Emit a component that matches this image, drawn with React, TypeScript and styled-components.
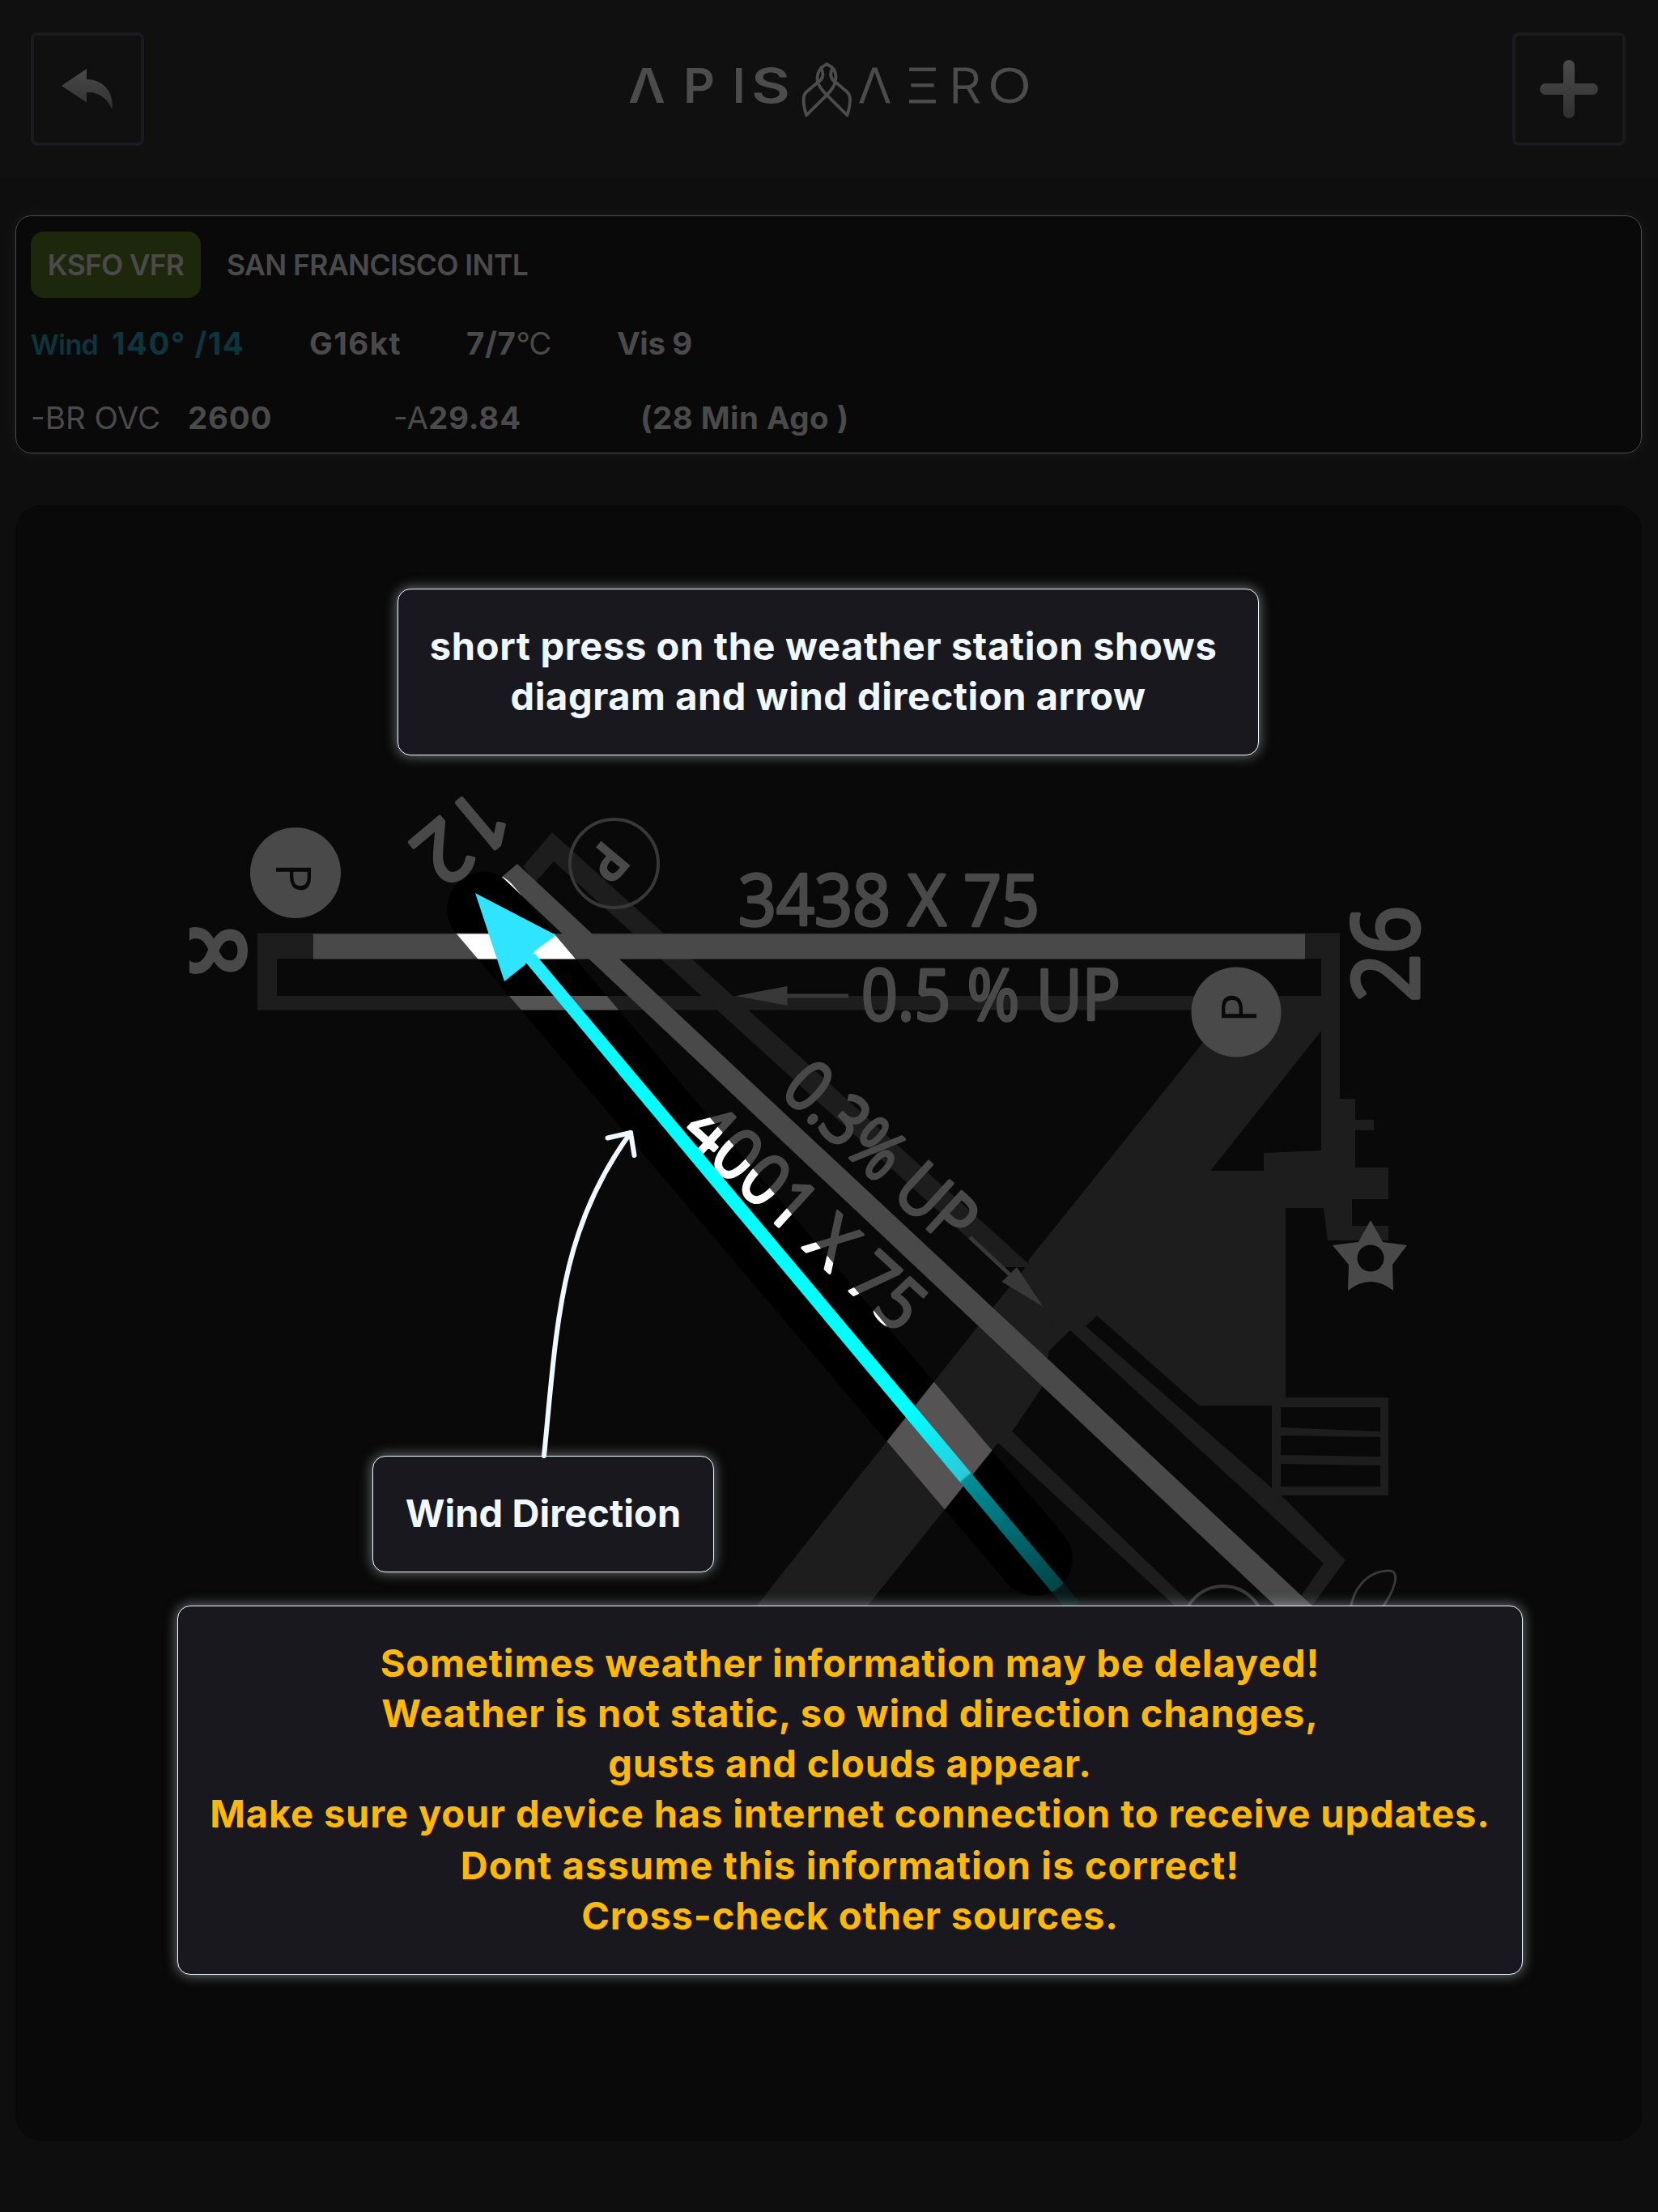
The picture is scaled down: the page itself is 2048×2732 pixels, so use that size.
import React from "react";
import styled, { createGlobalStyle } from "styled-components";

const GlobalStyle = createGlobalStyle`
  *, *::before, *::after { box-sizing: border-box; }
  body { margin: 0; background: #0e0e0e; }
`;

const Screen = styled.main`
  display: flex;
  flex-direction: column;
  width: 2048px;
  height: 2732px;
  background: #0e0e0e;
  font-family: "Inter", "Liberation Sans", sans-serif;
  color: #4a4a4b;
  overflow: hidden;
`;

const Header = styled.header`
  display: flex;
  justify-content: space-between;
  align-items: center;
  flex: none;
  height: 220px;
  padding: 0 40px 0 38px;
  background: #101010;
`;

const SquareButton = styled.button`
  display: flex;
  align-items: center;
  justify-content: center;
  width: 140px;
  height: 140px;
  padding: 0;
  border: 4px solid #1a1a1f;
  border-radius: 8px;
  background: transparent;
`;

const Body = styled.div`
  display: flex;
  flex-direction: column;
  gap: 64px;
  padding: 46px 20px 88px 19px;
`;

const WeatherCard = styled.section`
  height: 294px;
  padding: 19px 18px;
  border: 1px solid #4b4b4b;
  border-radius: 20px;
  background: #090909;
  box-shadow: 0 0 20px rgba(255, 255, 255, 0.06);
`;

const StationRow = styled.div`
  display: flex;
  align-items: center;
  gap: 32px;
  margin-bottom: 26px;
  font-size: 35.5px;
  font-weight: 600;
`;

const StationBadge = styled.span`
  display: flex;
  align-items: center;
  justify-content: center;
  width: 210px;
  height: 82px;
  border-radius: 16px;
  background: #1c270c;
  letter-spacing: -0.8px;
`;

const StationName = styled.span`
  letter-spacing: -0.6px;
`;

const DataRow = styled.div<{ $columns: string }>`
  display: grid;
  grid-template-columns: ${(p) => p.$columns};
  align-items: baseline;
  height: 60px;
  line-height: 60px;
  font-size: 38.5px;
  white-space: pre;

  & + & {
    margin-top: 32px;
  }
`;

const Value = styled.span<{ $weight?: number; $track?: number; $size?: number; $wind?: boolean }>`
  font-weight: ${(p) => p.$weight ?? 700};
  letter-spacing: ${(p) => p.$track ?? 0}px;
  font-size: ${(p) => p.$size ?? 38.5}px;
  color: ${(p) => (p.$wind ? "#0c353d" : "inherit")};
`;

const DiagramPanel = styled.section`
  position: relative;
  height: 2020px;
  border-radius: 32px;
  background: #090909;
  overflow: hidden;
`;

const Artwork = styled.svg`
  display: block;
  width: 2010px;
  height: 2020px;
`;

const Callout = styled.div<{ $x: number; $y: number; $w: number; $h: number; $warn?: boolean }>`
  position: absolute;
  left: ${(p) => p.$x}px;
  top: ${(p) => p.$y}px;
  width: ${(p) => p.$w}px;
  height: ${(p) => p.$h}px;
  padding-top: 39px;
  border: 1px solid #f0f8ff;
  border-radius: 16px;
  background: #19181e;
  box-shadow: 0 0 16px rgba(225, 240, 245, 0.5);
  color: ${(p) => (p.$warn ? "#ffb900" : "#f0f8ff")};
  font-size: 47px;
  font-weight: 700;
  line-height: 62px;
  text-align: center;
  white-space: pre;
`;

const Line = styled.div<{ $track?: number; $before?: number }>`
  letter-spacing: ${(p) => p.$track ?? 0.87}px;
  margin-top: ${(p) => p.$before ?? 0}px;
`;

const PointerArrow = styled.svg`
  position: absolute;
  left: 641px;
  top: 766px;
  width: 140px;
  height: 420px;
`;

function Logo() {
  const g = { lengthAdjust: "spacingAndGlyphs" as const, fontSize: 59 };
  return (
    <svg width="520" height="140" viewBox="763 40 520 140" fill="#4c4c4c" role="img" aria-label="APIS AERO">
      <g fontWeight="600">
        <text x="776" y="126.5" textLength="46" {...g}>Λ</text>
        <text x="844" y="126.5" textLength="39" {...g}>P</text>
        <text x="905" y="126.5" textLength="15.5" {...g}>I</text>
        <text x="928" y="126.5" textLength="48" {...g}>S</text>
      </g>
      <g fill="none" stroke="#4c4c4c" strokeWidth="3.8" strokeLinejoin="round" strokeLinecap="round">
        <path d="M1021.3 79.3C1011 84 1008.500 92 1010 101C1011.500 107 1016 112 1021.300 117.300L1046.500 142.300C1048.500 136 1050 129 1050 123C1050 119 1049 116.500 1047 114L1031.600 101C1034 92 1031.600 84 1021.300 79.300" />
        <path d="M1031.600 101C1031 107 1026.500 112 1021.300 117.300L996 142.300C994 136 992.600 129 992.600 123C992.600 119 993.500 116.500 995.500 114L1011 101C1016 98 1018 92 1015 86" />
        <path d="M1031.600 101C1026.500 98 1024.500 92 1027.600 86" />
      </g>
      <g fontWeight="300" stroke="#4c4c4c" strokeWidth="0.8">
        <text x="1060" y="126.5" textLength="41" {...g}>Λ</text>
        <text x="1119" y="126.5" textLength="41" {...g}>Ξ</text>
        <text x="1172" y="126.5" textLength="40" {...g}>R</text>
        <text x="1220" y="126.5" textLength="54" {...g}>O</text>
      </g>
    </svg>
  );
}

interface Palette {
  ground: string;
  runway: string;
  taxi: string;
  label: string;
  ring: string;
}

const dimmed: Palette = { ground: "#090909", runway: "#494949", taxi: "#1d1d1d", label: "#494949", ring: "#383838" };
const lit: Palette = { ground: "#000000", runway: "#ffffff", taxi: "#555353", label: "#ffffff", ring: "#999999" };

function Airport({ c }: { c: Palette }) {
  return (
    <g fontFamily='"Open Sans", "Liberation Sans", sans-serif'>
      <rect x="19" y="624" width="2010" height="2020" fill={c.ground} />

      <g fill={c.taxi}>
        <path d="M318 1152.500H1655V1357H1674V1383H1697V1396H1674V1442H1715V1481H1670V1514H1715V1532H1640L1635 1492H1588V1736H1481L1355 1625L1341 1638L1569 1836L1589 1853L1662 1927L1620 1984H1598L1635 1931L1322 1643L1296 1668L1287 1714L1250 1768L1474 1984H1452L1233 1782L1071 1984H934L1204 1643L1319 1500L1510 1257V1247.500H318ZM342 1184V1230H1632V1184ZM1632 1273L1495 1446H1561V1424L1632 1421Z" fillRule="evenodd" />
        <path d="M646 1070L682 1028L1275 1565L1235 1565L684 1064L661 1090Z" />
        <path d="M1485 1289L1520 1244H1632V1273L1495 1446L1300 1640L1270 1557Z" />
      </g>
      <path d="M1571 1726H1715V1847H1571ZM1582 1738V1763L1705 1768V1738ZM1582 1773V1797L1705 1799V1775ZM1582 1808V1836H1705V1810Z" fillRule="evenodd" fill={c.taxi} />

      <path d="M387 1153.500H1612V1184.500H387Z" fill={c.runway} />
      <path d="M639 1067L1641 2002H1595L620 1083Z" fill={c.runway} />

      <g fill="none" stroke={c.ring} strokeWidth="4">
        <circle cx="758.5" cy="1066.5" r="54.500" />
        <circle cx="1511" cy="2009" r="50" />
        <path d="M1668 1990C1670 1964 1688 1940 1716 1940C1730 1940 1724 1964 1704 1990" strokeWidth="3" />
      </g>
      <circle cx="365" cy="1078" r="56" fill={c.label} />
      <circle cx="1527" cy="1250" r="55.500" fill={c.label} />
      <g fontSize="61" textAnchor="middle">
        <text fill={c.ground} transform="translate(341 1084) rotate(90)">P</text>
        <text fill={c.ground} transform="translate(1552 1245) rotate(-90)">P</text>
        <text fill={c.label} fontWeight="700" fontSize="66" transform="translate(733 1050) rotate(130)">P</text>
      </g>

      <g fill={c.label} stroke={c.label} strokeWidth="3.500" strokeLinejoin="round" fontSize="88">
        <text x="912" y="1143" textLength="372" lengthAdjust="spacingAndGlyphs">3438 X 75</text>
        <text x="1064" y="1260" textLength="320" lengthAdjust="spacingAndGlyphs">0.5 % UP</text>
        <text transform="translate(962 1350) rotate(42.500)" textLength="286" lengthAdjust="spacingAndGlyphs">0.3% UP</text>
        <text transform="translate(839 1402) rotate(42.500)" textLength="366" lengthAdjust="spacingAndGlyphs">4001 X 75</text>
      </g>
      <g fill={c.label} stroke={c.label} strokeWidth="5" strokeLinejoin="round" fontSize="113" textAnchor="middle">
        <text transform="translate(1752 1178) rotate(-90)" textLength="119" lengthAdjust="spacingAndGlyphs">26</text>
        <text transform="translate(547 1006) rotate(140)" fontSize="103">12</text>
        <text transform="translate(221 1174) rotate(90)">8</text>
      </g>
      <rect x="190" y="1120" width="44" height="110" fill={c.ground} />

      <g fill={c.ring} stroke={c.ring}>
        <path d="M972 1230H1048" strokeWidth="5" />
        <path d="M909 1230L972.500 1218V1242Z" stroke="none" />
        <path d="M1198 1528L1247 1574" strokeWidth="5" />
        <path d="M1288.500 1614L1256 1565L1237.500 1583Z" stroke="none" />
      </g>

      <path
        d="M1693 1507L1708 1534L1738 1538L1720 1562L1721 1594Q1693 1572 1665 1594L1666 1562L1646 1538L1678 1534Z"
        fill={c.label}
      />
      <circle cx="1693" cy="1554" r="16.500" fill={c.ground} />
    </g>
  );
}

function WindArrow() {
  return (
    <g>
      <path d="M648 1187L660 1177L1333 1978L1319 1990Z" fill="url(#windFade)" />
      <path d="M587 1103L687 1155L661 1174L648 1192L623 1212Z" fill="#2fe4ff" />
    </g>
  );
}

function RunwayDiagram() {
  return (
    <Artwork viewBox="19 624 2010 2020">
      <defs>
        <clipPath id="spotlight">
          <rect x="-572" y="-46" width="1144" height="92" rx="46" transform="translate(938.500 1524) rotate(49.700)" />
        </clipPath>
        <linearGradient id="windFade" gradientUnits="userSpaceOnUse" x1="654" y1="1182" x2="1326" y2="1984">
          <stop offset="0" stopColor="#2aeaff" />
          <stop offset="0.12" stopColor="#10f6ff" />
          <stop offset="0.2" stopColor="#00ffff" />
          <stop offset="0.7" stopColor="#00ffff" />
          <stop offset="0.8" stopColor="#2bc8da" />
          <stop offset="0.803" stopColor="#008f98" />
          <stop offset="0.96" stopColor="#00494c" />
          <stop offset="1" stopColor="#003a3c" />
        </linearGradient>
      </defs>
      <Airport c={dimmed} />
      <g opacity="0.3">
        <WindArrow />
      </g>
      <g clipPath="url(#spotlight)">
        <Airport c={lit} />
        <path d="M540 1070H612L590 1102H540Z" fill={lit.ground} />
        <WindArrow />
      </g>
    </Artwork>
  );
}

export default function App() {
  return (
    <>
      <GlobalStyle />
      <Screen>
        <Header>
          <SquareButton aria-label="Back">
            <svg width="64" height="50" viewBox="0 0 64 50">
              <defs>
                <linearGradient id="backShade" x1="0" y1="0" x2="0" y2="1">
                  <stop offset="0" stopColor="#4a4a4a" />
                  <stop offset="1" stopColor="#303030" />
                </linearGradient>
              </defs>
              <path d="M0 21L31 0V13C50 13 65 27 62.500 50C56 36 46 28.500 31 29V41.500Z" fill="url(#backShade)" />
            </svg>
          </SquareButton>
          <Logo />
          <SquareButton aria-label="Add">
            <svg width="72" height="72" viewBox="0 0 72 72">
              <defs>
                <linearGradient id="plusShade" x1="0" y1="0" x2="0" y2="1">
                  <stop offset="0" stopColor="#4a4a4a" />
                  <stop offset="1" stopColor="#303030" />
                </linearGradient>
              </defs>
              <path
                d="M29 7a7 7 0 0 1 14 0V29H65a7 7 0 0 1 0 14H43V65a7 7 0 0 1-14 0V43H7a7 7 0 0 1 0-14H29Z"
                fill="url(#plusShade)"
              />
            </svg>
          </SquareButton>
        </Header>

        <Body>
          <WeatherCard>
            <StationRow>
              <StationBadge>KSFO VFR</StationBadge>
              <StationName>SAN FRANCISCO INTL</StationName>
            </StationRow>
            <DataRow $columns="100px 244px 194px 186px auto">
              <Value $wind $weight={600} $size={34} $track={-0.6}>Wind</Value>
              <Value $wind $track={1.4}>140° /14</Value>
              <Value $track={1.4}>G16kt</Value>
              <span>
                <Value $track={0.6}>7/7</Value>
                <Value $weight={400} $track={-1.5}>°C</Value>
              </span>
              <Value $track={-0.4}>Vis 9</Value>
            </DataRow>
            <DataRow $columns="194px 254px 305px auto">
              <Value $weight={400}>-BR OVC</Value>
              <Value $track={0.8}>2600</Value>
              <span>
                <Value $weight={400}>-A</Value>
                <Value $track={0.8}>29.84</Value>
              </span>
              <Value $track={0.45}>(28 Min Ago )</Value>
            </DataRow>
          </WeatherCard>

          <DiagramPanel>
            <RunwayDiagram />
            <Callout $x={472} $y={103} $w={1064} $h={206}>
              <Line $track={0.63}>{"short press on the weather station shows "}</Line>
              <Line $track={0.55}>diagram and wind direction arrow</Line>
            </Callout>
            <Callout $x={441} $y={1174} $w={422} $h={144}>
              <Line $track={0.05}>Wind Direction</Line>
            </Callout>
            <Callout $x={200} $y={1359} $w={1662} $h={456} $warn>
              <Line>Sometimes weather information may be delayed!</Line>
              <Line>Weather is not static, so wind direction changes,</Line>
              <Line>gusts and clouds appear.</Line>
              <Line>Make sure your device has internet connection to receive updates.</Line>
              <Line $track={1.1} $before={2}>Dont assume this information is correct!</Line>
              <Line>Cross-check other sources.</Line>
            </Callout>
            <PointerArrow viewBox="660 1390 140 420" fill="none" stroke="#f0f8ff" strokeWidth="6" strokeLinecap="round" strokeLinejoin="round">
              <path d="M672 1798C688 1640 690 1520 779 1399" />
              <path d="M750.500 1405.500L779 1399L783.500 1427" />
            </PointerArrow>
          </DiagramPanel>
        </Body>
      </Screen>
    </>
  );
}
